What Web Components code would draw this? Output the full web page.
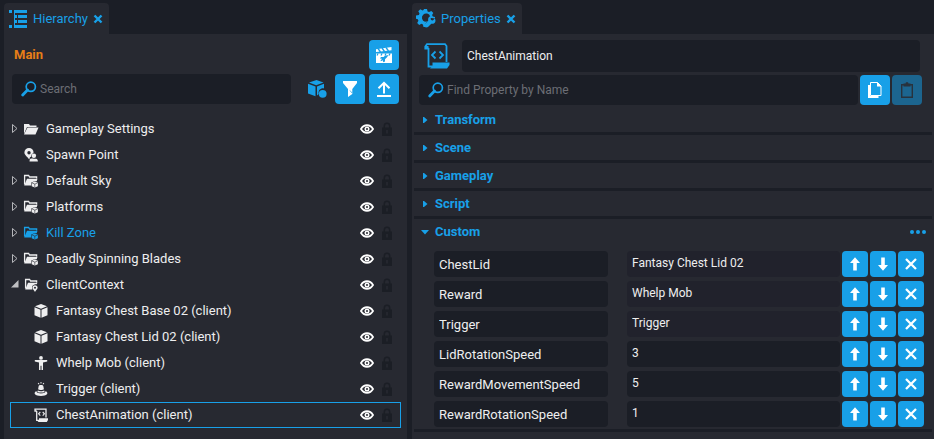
<!DOCTYPE html>
<html lang="en">
<head>
<meta charset="utf-8">
<title>Scene editor</title>
<style>
  :root {
    --base: #1b1e26;
    --panel: #272931;
    --field: #1b1e26;
    --field-locked: #21222c;
    --accent: #18a0e8;
    --text: #eeeeef;
    --muted: #6c6e75;
    --warm: #e67e17;
  }
  html, body { height: 100%; }
  body {
    margin: 0;
    background: var(--base);
    color: var(--text);
    font: 13px/16px Roboto, "Noto Sans", sans-serif;
    overflow: hidden;
  }
</style>
</head>
<body>
<editor-app></editor-app>

<script>
const ICONS = {
  hierarchy: [18, 18, '<path d="M0 0h3v3H0zM5 0h13v3H5zM5 5h3v3H5zM9 5h9v3H9zM5 10h3v3H5zM9 10h9v3H9zM0 15h3v3H0zM5 15h13v3H5z"/><path d="M5.5 3v12" fill="none" stroke="currentColor" stroke-width="1"/>'],
  gear: [18, 19, '<path fill-rule="evenodd" d="M7 0h3l.6 2.400 1.500.6L14.300 1.900l2 2-1.200 2.200.7 1.400L18 8v1.500l-3.800-.5-1.700.8.700-2.300a4.200 4.200 0 1 0-5.200 5.200l2-.4-1.500 2.500L9 18H6.500l-.6-2.600-1.500-.6-2.200 1.200-2-2 1.200-2.200-.6-1.500L-1 9.800V6.500l2.900-.6.6-1.500-1.200-2.100 2-2 2.200 1.200L6.500 1z"/><path d="m17.800 9.500-2 2-1.800-.4-.5-1.800 2-1.800c-3-1-5 1.500-4.200 4L8 15c-1.500 2 1 4.500 3 3l3.300-3.300c2.800.8 5.500-2 3.500-5.200z"/>'],
  close: [10, 10, '<path d="m1.500 1.500 7 7m0-7-7 7" fill="none" stroke="currentColor" stroke-width="2.400"/>'],
  search: [16, 16, '<circle cx="9.800" cy="5.800" r="4.600" fill="none" stroke="currentColor" stroke-width="1.700"/><path d="m6.500 9-4.800 5" fill="none" stroke="currentColor" stroke-width="2.800" stroke-linecap="round"/>'],
  clapper: [16, 16, '<path d="M0 6.500h16V16H0z"/><path d="M0 2.200 15.500 0v3.200L0 5z"/><path d="m2 1.500 2.500 3.500m1.500-4L8.500 4.500m1.500-4L12.500 4M2 6.500l-1 2m5-2-1 2m5-2-1 2m5-2-1 2" stroke="#18a0e8" stroke-width="1.300"/><path d="M12.500 8 9 8.700 7.500 10H5l-1 1.500 2 .2-1.500 2 .4.500 2-1 .3 2L9 14.500V12.200l2-2z" fill="#18a0e8"/>'],
  cubeball: [19, 18, '<path d="m8.500 0 7 2.500-7.300 2.700L1 2.500zM0 3.800l7.500 2.700v9.800L0 13.600zM9 6.500l7-2.700v4.600c-3.500-.5-6 2-5.300 5.600L9 15.500z"/><circle cx="14.700" cy="13.800" r="3.900"/>'],
  filter: [16, 16, '<path d="M1 0h14v2l-4.700 6v5L6 16V8L1 2z"/><path d="M8 9.500 10 12" stroke="#18a0e8" stroke-width=".700"/>'],
  upload: [16, 16, '<path d="M8 12.500V2M2.500 7.300 8 1.800l5.500 5.500M1 15h14" fill="none" stroke="currentColor" stroke-width="2"/>'],
  eye: [14, 10, '<path d="M1 5c3-5 9-5 12 0-3 5-9 5-12 0z" fill="none" stroke="currentColor" stroke-width="1.800"/><circle cx="7" cy="5" r="2.500"/><circle cx="7" cy="5" r="1" fill="#272931"/>'],
  lock: [10, 14, '<path d="M2.300 6V4a2.700 2.700 0 0 1 5.400 0v2" fill="none" stroke="currentColor" stroke-width="1.500"/><path fill-rule="evenodd" d="M0 5.500h10V14H0zM4.200 8v3.500h1.600V8z"/>'],
  collapsed: [8, 10, '<path d="M1.500.5 6 4.500l-4.500 4z" fill="none" stroke="#b4b5b9" stroke-width="1"/>'],
  expanded: [8, 10, '<path d="M7.500 0v7.500H0z" fill="#bfbfc2"/>'],
  folder: [16, 14, '<path d="M1 12V2h5l1 1.500h6.500V5H4z"/><path d="M4.500 5.500H15.500L12.500 12.500H1z"/>'],
  group: [16, 14, '<path d="M1.600 10.500V1.500h4l1 1.500h7v1.500" fill="none" stroke="currentColor" stroke-width="1.300"/><path d="M4 4.700h10.500l-.8 2.500h-2L8.200 8.500v3H1.200z"/><path d="m11.800 7.500 3.100 1.200v3.500l-3.100 1.400-3.100-1.400V8.700z"/><path d="m9 8.900 2.800 1.200 2.900-1.200m-2.900 1.200v3" stroke="#272931" stroke-width=".600" fill="none"/>'],
  context: [16, 14, '<path d="M2.600 10.500V1.500h4l1 1.500h6v1.500" fill="none" stroke="currentColor" stroke-width="1.300"/><path d="M5 4.700h9.500l-.8 1.500C10 6 8 8.500 9.500 11.500H2.200z"/><path fill-rule="evenodd" d="M12 7.200a2.600 2.600 0 0 1 2.600 2.600c0 1.400-1.800 2.600-2.600 4.200-.8-1.600-2.600-2.800-2.600-4.200A2.600 2.600 0 0 1 12 7.200zm0 1.600a1 1 0 1 0 0 2 1 1 0 0 0 0-2z"/>'],
  spawn: [16, 14, '<path fill-rule="evenodd" d="M6 0a4.600 4.600 0 0 1 4.600 4.600L8.300 7v1.500L7 9.300l-.8 2.200C4.500 8.600 1.400 7.300 1.400 4.600A4.600 4.600 0 0 1 6 0zm0 3a1.700 1.700 0 1 0 0 3.400A1.700 1.700 0 0 0 6 3z"/><circle cx="10.900" cy="7.700" r="2.200"/><path d="M6.500 13.500c0-3.500 2-3 4.400-2.800 2.500-.2 4 0 4 2.800z"/>'],
  cube: [14, 14, '<path d="m7 0 6 2.300L7 4.700 1 2.300zM.5 3.300l6 2.500v8L.5 11.300zM13.500 3.300l-6 2.500v8l6-2.500z"/>'],
  person: [14, 14, '<circle cx="7" cy="1.900" r="1.900"/><path d="M.8 4h12.400v1.600L9 6.600V14H7.500V9.800h-1V14H5V6.600L.8 5.600z"/>'],
  trigger: [14, 14, '<path d="M6.500 0h1v1.500h-1zM3.700 1.200l.8-.5 1 1.300-.8.500zM9.500.7l.8.500-1 1.300-.8-.5z"/><path d="M4.600 4.400c0-1.800 4.800-1.800 4.800 0l.5 2.900c-1 1-4.800 1-5.800 0z"/><path d="M3.800 8.400c1.500 1 4.900 1 6.400 0 .8 1.200.3 2.200-3.200 2.200S3 9.600 3.800 8.400zM2.500 9C1.800 12.200 12.200 12.200 11.500 9c4 2 1.300 5-4.500 5S-1.500 11 2.500 9z"/>'],
  script: [26, 26, '<path d="M4.500 5v18.500H10M4.500 5.500H1.300v-2L3 1.200h18L22.500 3v16" fill="none" stroke="currentColor" stroke-width="1.800"/><path d="M1 3h3.500v3H1zM8.500 19.500h17V22l-2.500 3.500H6L8.500 23z"/><path d="M11.500 8.500 8 12l3.500 3.500m4-7L19 12l-3.500 3.500" fill="none" stroke="currentColor" stroke-width="1.800"/>'],
  scriptsmall: [14, 14, '<path d="M2.700 3v9.300H5M2.700 3H1V1.200h11v8.300" fill="none" stroke="currentColor" stroke-width="1.300"/><path d="M5 10.300h9V12l-1.200 2H3.500L5 12.500z"/><path d="M6.300 4 4.600 5.800l1.700 1.800M8.700 4l1.700 1.800-1.700 1.800" fill="none" stroke="currentColor" stroke-width="1.100"/>'],
  copy: [16, 18, '<path d="M3.500 1.500h7l3.500 3.500v9.500H3.500z" fill="none" stroke="currentColor" stroke-width="1"/><path d="M1 4h2v11h8.500v2H1z"/><path d="M10 1v4.500h4.500z"/>'],
  paste: [14, 16, '<path d="M1.700 2.700h10.600v12.600H1.700z" fill="none" stroke="currentColor" stroke-width="1.400"/><path d="M3.500 1.500h2L6 .3h2l.5 1.200h2v3h-7z"/>'],
  right: [8, 8, '<path d="M2 1v6h1l3.500-3L3 1z"/>'],
  down: [8, 8, '<path d="M0 2h8L4 6.500z"/>'],
  dots: [16, 4, '<circle cx="2" cy="2" r="2"/><circle cx="8" cy="2" r="2"/><circle cx="14" cy="2" r="2"/>'],
  arrowup: [12, 14, '<path d="M6 .3 11 6H7.800v7.500H4.200V6H1z"/>'],
  arrowdown: [12, 14, '<path d="M6 13.700 11 8H7.800V.5H4.200V8H1z"/>'],
  remove: [12, 12, '<path d="m1 1 10 10m0-10L1 11" fill="none" stroke="currentColor" stroke-width="2.300"/>']
};

const RESET = `
  *, *::before { box-sizing: border-box; }
  button { appearance: none; border: 0; margin: 0; padding: 0; background: none; color: inherit; font: inherit; cursor: pointer; }
  button:focus-visible { outline: 1px solid var(--text); }
`;

class Base extends HTMLElement {
  connectedCallback() {
    if (this.shadowRoot) return;
    this.attachShadow({ mode: "open" }).innerHTML = `<style>${RESET}${this.css()}</style>${this.html()}`;
  }
  attr(name) { return this.getAttribute(name) || ""; }
}

customElements.define("ui-icon", class extends Base {
  css() { return ":host { display: inline-flex; flex: none; } svg { display: block; overflow: visible; fill: currentColor; }"; }
  html() {
    const [w, h, body] = ICONS[this.attr("name")];
    return `<svg width="${w}" height="${h}" viewBox="0 0 ${w} ${h}" aria-hidden="true">${body}</svg>`;
  }
});

customElements.define("icon-button", class extends Base {
  css() { return `
    :host { display: inline-flex; flex: none; }
    button { display: grid; place-items: center; width: var(--size, 30px); height: var(--size, 30px); border-radius: 4px; background: var(--accent); color: #fff; }
    button:disabled { background: #1c658f; color: #28323c; cursor: default; }
  `; }
  html() { return `<button type="button" aria-label="${this.attr("label")}" ${this.hasAttribute("disabled") ? "disabled" : ""}><ui-icon name="${this.attr("icon")}"></ui-icon></button>`; }
});

customElements.define("text-field", class extends Base {
  css() { return `
    :host { display: block; min-width: 0; }
    label { display: flex; align-items: center; height: var(--height, 26px); padding: 0 5px; border-radius: 4px; background: var(--field); }
    :host([locked]) label { background: var(--field-locked); }
    :host([icon]) label { padding: 0 9px; gap: 3px; }
    ui-icon { color: var(--accent); }
    input { flex: 1; min-width: 0; width: 100%; height: 100%; border: 0; padding: 0; outline: 0; background: none; color: inherit; font: inherit; font-size: var(--text-size, 12px); }
    :host([raised]) input { padding-bottom: 2px; }
    input::placeholder { color: var(--muted); opacity: 1; }
  `; }
  html() {
    const icon = this.attr("icon");
    return `<label>${icon ? `<ui-icon name="${icon}"></ui-icon>` : ""}<input type="text" aria-label="${this.attr("label")}" value="${this.attr("value")}" placeholder="${this.attr("placeholder")}" ${this.hasAttribute("locked") ? "readonly" : ""}></label>`;
  }
});

customElements.define("dock-panel", class extends Base {
  css() { return `
    :host { display: flex; flex-direction: column; min-width: 0; }
    header { display: flex; padding-top: 3px; }
    .tab { display: flex; align-items: center; height: 31px; padding: 0 6px 0 5px; border-radius: 4px 4px 0 0; background: var(--panel); color: var(--accent); }
    .tab button { display: flex; align-items: center; gap: 6px; height: 100%; }
    .tab .close { margin-left: 5px; }
    main { flex: 1; min-height: 0; background: var(--panel); }
  `; }
  html() {
    const t = this.attr("heading");
    return `<header><div class="tab"><button type="button"><ui-icon name="${this.attr("icon")}"></ui-icon>${t}</button><button type="button" class="close" aria-label="Close ${t}"><ui-icon name="close"></ui-icon></button></div></header><main><slot></slot></main>`;
  }
});

customElements.define("tree-row", class extends Base {
  css() { return `
    :host { display: flex; align-items: center; height: 26px; box-sizing: border-box; padding: 0 8px 0 0; border: 1px solid transparent; }
    :host([selected]) { border-color: var(--accent); }
    :host([tinted]) .name { color: var(--accent); }
    .toggle { width: 12px; height: 20px; flex: none; display: flex; align-items: center; }
    .name { flex: 1; min-width: 0; display: flex; align-items: center; white-space: nowrap; }
    .name ui-icon { width: 23px; }
    :host([child]) .name { padding-left: 11px; }
    :host([child]) .name ui-icon { width: 22px; }
    .eye { margin-right: 8px; color: #fff; }
    .lock { color: #1b1e25; }
    .eye, .lock { display: flex; }
  `; }
  html() {
    const s = this.attr("state"), n = this.textContent;
    const toggle = s ? `<button type="button" class="toggle" aria-label="Toggle ${n}"><ui-icon name="${s}"></ui-icon></button>` : `<span class="toggle"></span>`;
    return `${toggle}<span class="name"><ui-icon name="${this.attr("icon")}"></ui-icon><slot></slot></span>
      <button type="button" class="eye" aria-label="Visibility of ${n}"><ui-icon name="eye"></ui-icon></button>
      <button type="button" class="lock" aria-label="Lock ${n}"><ui-icon name="lock"></ui-icon></button>`;
  }
});

customElements.define("hierarchy-view", class extends Base {
  css() { return `
    :host { display: block; }
    .top, .tools { display: flex; align-items: center; padding: 0 8px; }
    .top { justify-content: space-between; padding: 6px 8px 4px 10px; }
    h1 { margin: 0; font-size: 13px; line-height: 16px; font-weight: 700; color: var(--warm); }
    .tools { gap: 4px; margin-bottom: 11px; }
    text-field { flex: 1; --height: 30px; }
    .shapes { display: grid; place-items: center; flex: none; width: 36px; height: 30px; padding-left: 8px; color: var(--accent); }
    nav { padding: 1px 6px 0; }
  `; }
  html() { return `
    <div class="top"><h1>Main</h1><icon-button icon="clapper" label="Scenes"></icon-button></div>
    <div class="tools">
      <text-field icon="search" label="Search" placeholder="Search"></text-field>
      <button type="button" class="shapes" aria-label="Object types"><ui-icon name="cubeball"></ui-icon></button>
      <icon-button icon="filter" label="Filter"></icon-button>
      <icon-button icon="upload" label="Publish"></icon-button>
    </div>
    <nav aria-label="Scene objects">
      <tree-row state="collapsed" icon="folder">Gameplay Settings</tree-row>
      <tree-row icon="spawn">Spawn Point</tree-row>
      <tree-row state="collapsed" icon="group">Default Sky</tree-row>
      <tree-row state="collapsed" icon="group">Platforms</tree-row>
      <tree-row state="collapsed" icon="group" tinted>Kill Zone</tree-row>
      <tree-row state="collapsed" icon="group">Deadly Spinning Blades</tree-row>
      <tree-row state="expanded" icon="context">ClientContext</tree-row>
      <tree-row child icon="cube">Fantasy Chest Base 02 (client)</tree-row>
      <tree-row child icon="cube">Fantasy Chest Lid 02 (client)</tree-row>
      <tree-row child icon="person">Whelp Mob (client)</tree-row>
      <tree-row child icon="trigger">Trigger (client)</tree-row>
      <tree-row child icon="scriptsmall" selected>ChestAnimation (client)</tree-row>
    </nav>`; }
});

customElements.define("property-section", class extends Base {
  css() { return `
    :host { display: block; margin: 0 2px; border-bottom: 3px solid var(--base); }
    header { display: flex; align-items: center; justify-content: space-between; height: 25px; padding: 0 6px 0 7px; color: var(--accent); }
    header button { display: flex; align-items: center; gap: 6px; }
    .title { font-weight: 700; height: 100%; }
    .more { height: 12px; }
  `; }
  html() {
    const open = this.hasAttribute("open");
    return `<header><button type="button" class="title" aria-expanded="${open}"><ui-icon name="${open ? "down" : "right"}"></ui-icon>${this.attr("heading")}</button>${open ? '<button type="button" class="more" aria-label="More options"><ui-icon name="dots"></ui-icon></button>' : ""}</header><slot></slot>`;
  }
});

customElements.define("property-row", class extends Base {
  css() { return `
    :host { display: flex; gap: 2px; --size: 26px; }
    .fields { flex: 1; min-width: 0; display: grid; grid-template-columns: 174fr 213fr; gap: 19px; }
    .key { --text-size: 13px; }
  `; }
  html() {
    const n = this.attr("name");
    return `<div class="fields"><text-field class="key" label="Property name" value="${n}"></text-field>
      <text-field raised label="${n}" value="${this.attr("value")}" ${this.hasAttribute("locked") ? "locked" : ""}></text-field></div>
      <icon-button icon="arrowup" label="Move ${n} up"></icon-button>
      <icon-button icon="arrowdown" label="Move ${n} down"></icon-button>
      <icon-button icon="remove" label="Remove ${n}"></icon-button>`;
  }
});

customElements.define("properties-view", class extends Base {
  css() { return `
    :host { display: block; }
    .object { display: flex; align-items: center; gap: 12px; padding: 6px 14px 3px 12px; color: var(--accent); }
    .object text-field { flex: 1; --height: 32px; color: var(--text); }
    .find { display: flex; gap: 2px; padding: 0 12px 2px 7px; }
    .find text-field { flex: 1; --height: 30px; }
    .rows { display: grid; gap: 4px; padding: 7px 8px 2px 20px; }
  `; }
  html() { return `
    <div class="object"><ui-icon name="script"></ui-icon><text-field label="Object name" value="ChestAnimation"></text-field></div>
    <div class="find">
      <text-field icon="search" label="Find property by name" placeholder="Find Property by Name"></text-field>
      <icon-button icon="copy" label="Copy"></icon-button>
      <icon-button icon="paste" label="Paste" disabled></icon-button>
    </div>
    <property-section heading="Transform"></property-section>
    <property-section heading="Scene"></property-section>
    <property-section heading="Gameplay"></property-section>
    <property-section heading="Script"></property-section>
    <property-section heading="Custom" open>
      <div class="rows">
        <property-row name="ChestLid" value="Fantasy Chest Lid 02" locked></property-row>
        <property-row name="Reward" value="Whelp Mob" locked></property-row>
        <property-row name="Trigger" value="Trigger" locked></property-row>
        <property-row name="LidRotationSpeed" value="3"></property-row>
        <property-row name="RewardMovementSpeed" value="5"></property-row>
        <property-row name="RewardRotationSpeed" value="1"></property-row>
      </div>
    </property-section>`; }
});

customElements.define("editor-app", class extends Base {
  css() { return `
    :host { display: flex; gap: 5px; height: 100%; padding-left: 4px; box-sizing: border-box; }
    .left { flex: 403 1 0; }
    .right { flex: 522 1 0; }
  `; }
  html() { return `
    <dock-panel class="left" icon="hierarchy" heading="Hierarchy"><hierarchy-view></hierarchy-view></dock-panel>
    <dock-panel class="right" icon="gear" heading="Properties"><properties-view></properties-view></dock-panel>`; }
});
</script>
</body>
</html>
